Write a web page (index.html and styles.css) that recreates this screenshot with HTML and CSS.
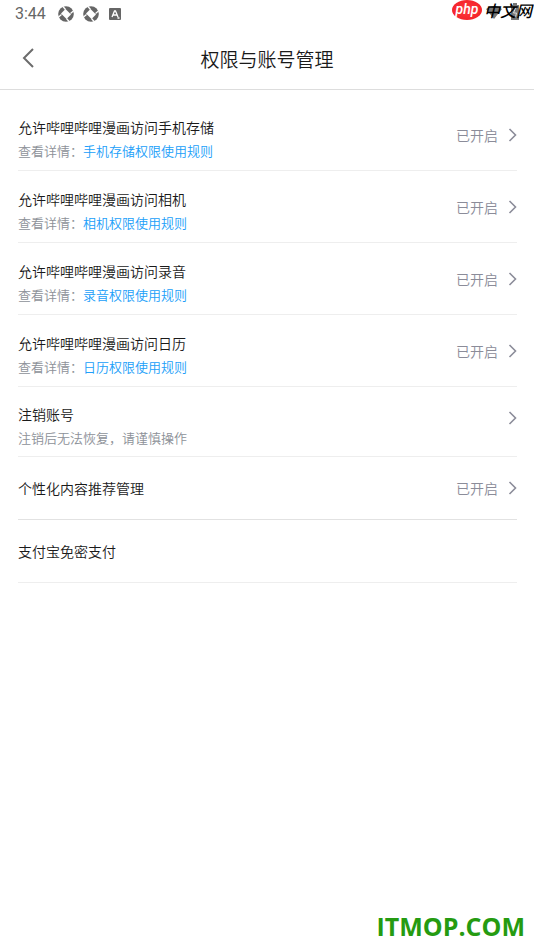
FILE: index.html
```html
<!DOCTYPE html>
<html lang="zh-CN">
<head>
<meta charset="utf-8">
<meta name="viewport" content="width=device-width, initial-scale=1">
<title>权限与账号管理</title>
<link rel="stylesheet" href="styles.css">
</head>
<body>
<svg class="defs" aria-hidden="true">
  <symbol id="chevron" viewBox="0 0 8 14"><path d="M1 1l6 6-6 6" fill="none" stroke="currentColor" stroke-width="1.6"/></symbol>
  <symbol id="shutter" viewBox="0 0 16 16">
    <circle cx="8" cy="8" r="7.8" fill="currentColor"/>
    <path d="M7.500 3L13 8.500 8.500 13 3 7.500z" fill="#fff"/>
    <path d="M7.500 3.500L4.500 0M12.500 7.500L16 4.500M8.500 12.500l3 3.500M3.500 8.500L0 11.500" stroke="#fff" stroke-width="1.300"/>
  </symbol>
</svg>
<div class="statusbar">
  <span class="clock">3:44</span>
  <svg class="shutter" aria-hidden="true"><use href="#shutter"/></svg>
  <svg class="shutter" aria-hidden="true"><use href="#shutter"/></svg>
  <svg class="badge" viewBox="0 0 12 12" aria-hidden="true"><rect width="12" height="12" rx="1" fill="currentColor"/><path d="M3 9l2.500-6h1L9 9M4 7h4M8.500 10h2" fill="none" stroke="#fff" stroke-width="1.300"/></svg>
  <div class="system">
    <svg class="signals" viewBox="0 0 36 20" aria-hidden="true"><path d="M0 9Q8 3 16 9L8 19z" fill="#777"/><path d="M25 5h2V3h4v2h2v15h-8z" fill="#777"/><path d="M29.500 8l-2 5h3l-1 4" fill="none" stroke="#ddd"/></svg>
    <div class="brand"><span class="php">php</span><span class="site">中文网</span></div>
  </div>
</div>
<header class="header">
  <button class="back" type="button" aria-label="返回"><svg viewBox="0 0 12 20" aria-hidden="true"><path d="M11 1L2 10l9 9" fill="none" stroke="currentColor" stroke-width="2"/></svg></button>
  <h1>权限与账号管理</h1>
</header>
<main class="list">
  <section class="row">
    <div class="info"><h2>允许哔哩哔哩漫画访问手机存储</h2><p>查看详情：<a href="#storage">手机存储权限使用规则</a></p></div>
    <button class="state" type="button">已开启<svg aria-hidden="true"><use href="#chevron"/></svg></button>
  </section>
  <section class="row">
    <div class="info"><h2>允许哔哩哔哩漫画访问相机</h2><p>查看详情：<a href="#camera">相机权限使用规则</a></p></div>
    <button class="state" type="button">已开启<svg aria-hidden="true"><use href="#chevron"/></svg></button>
  </section>
  <section class="row">
    <div class="info"><h2>允许哔哩哔哩漫画访问录音</h2><p>查看详情：<a href="#record">录音权限使用规则</a></p></div>
    <button class="state" type="button">已开启<svg aria-hidden="true"><use href="#chevron"/></svg></button>
  </section>
  <section class="row">
    <div class="info"><h2>允许哔哩哔哩漫画访问日历</h2><p>查看详情：<a href="#calendar">日历权限使用规则</a></p></div>
    <button class="state" type="button">已开启<svg aria-hidden="true"><use href="#chevron"/></svg></button>
  </section>
  <section class="row account">
    <div class="info"><h2>注销账号</h2><p>注销后无法恢复，请谨慎操作</p></div>
    <button class="state" type="button" aria-label="注销账号"><svg aria-hidden="true"><use href="#chevron"/></svg></button>
  </section>
  <section class="row single strong">
    <h2>个性化内容推荐管理</h2>
    <button class="state" type="button">已开启<svg aria-hidden="true"><use href="#chevron"/></svg></button>
  </section>
  <section class="row single">
    <h2>支付宝免密支付</h2>
  </section>
</main>
<div class="watermark">ITMOP.COM</div>
</body>
</html>
```
FILE: styles.css
```css
* { box-sizing: border-box; }
body {
  margin: 0;
  min-height: 100vh;
  position: relative;
  background: #fff;
  color: #1a1a1a;
  font-family: "Noto Sans CJK SC", sans-serif;
  font-weight: 350;
}
h1, h2, p { margin: 0; font-weight: 350; }
button { border: 0; padding: 0; background: none; font: inherit; cursor: pointer; }
.defs { position: absolute; width: 0; height: 0; }

.statusbar {
  display: flex;
  align-items: center;
  height: 28px;
  padding-left: 15px;
  color: #666;
}
.clock { margin-right: 12px; font: 400 16px/28px Roboto, sans-serif; }
.shutter { width: 16px; height: 16px; margin-right: 9px; }
.badge { width: 12px; height: 12px; margin-left: 1px; }
.system { position: relative; align-self: flex-start; margin-left: auto; }
.signals { position: absolute; right: 12px; top: 0; width: 36px; height: 20px; }
.brand { position: relative; display: flex; align-items: center; gap: 2px; height: 20px; padding-right: 2px; }
.php {
  width: 30px;
  height: 20px;
  border-radius: 50%;
  background: radial-gradient(#ff3b40, #f01b22);
  color: #fff;
  font: italic 500 14px/18px Roboto, sans-serif;
  text-align: center;
}
.site { color: #000; font-size: 16px; font-weight: 500; font-style: italic; line-height: 20px; }

.header {
  display: grid;
  grid-template-columns: 48px 1fr 48px;
  align-items: center;
  height: 62px;
  border-bottom: 1px solid #ddd;
}
.header h1 { font-size: 19px; line-height: 28px; text-align: center; }
.back { justify-self: center; width: 32px; height: 32px; margin-left: 8px; color: #6c6c6c; }
.back svg { display: block; width: 12px; height: 20px; margin: 0 auto 2px; }

.list { padding: 9px 17px 0 18px; }
.row {
  display: flex;
  align-items: center;
  justify-content: space-between;
  border-bottom: 1px solid #eee;
}
.info { padding: 16px 0 7px; }
.row h2 { font-size: 14px; line-height: 24px; }
.row p { font-size: 13px; line-height: 24px; color: #8d9198; }
.row a { color: #209ef9; text-decoration: none; }
.state {
  display: flex;
  align-items: center;
  gap: 10px;
  color: #8b8c99;
  font-size: 14px;
  line-height: 24px;
}
.state svg { width: 9px; height: 14px; }
.account { align-items: flex-start; }
.account .info { padding: 15px 0 6px; }
.account .state { padding: 24px 0; }
.single { height: 63px; }
.strong { border-bottom-color: #e2e2e2; }

.watermark {
  position: absolute;
  right: 9px;
  bottom: 7px;
  color: #259b11;
  font: 700 25px/34px "Open Sans", sans-serif;
}
```
